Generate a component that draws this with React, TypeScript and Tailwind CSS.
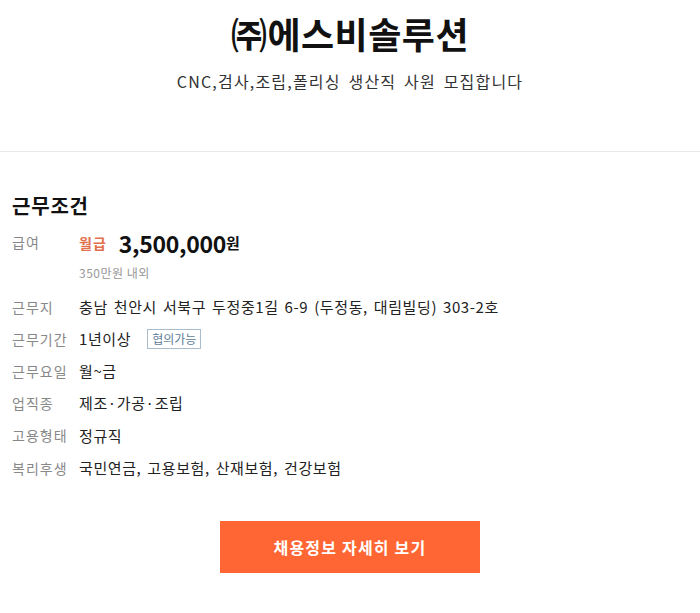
import React from "react";

const rows: { label: string; value: React.ReactNode }[] = [
  { label: "근무지", value: "충남 천안시 서북구 두정중1길 6-9 (두정동, 대림빌딩) 303-2호" },
  {
    label: "근무기간",
    value: (
      <span className="flex items-center">
        <span>1년이상</span>
        <span className="ml-[16px] border border-[#a9bccb] px-[4px] text-[12px] tracking-[0px] leading-[18px] text-[#5d7d97]">협의가능</span>
      </span>
    ),
  },
  { label: "근무요일", value: "월~금" },
  { label: "업직종", value: "제조·가공·조립" },
  { label: "고용형태", value: "정규직" },
  { label: "복리후생", value: "국민연금, 고용보험, 산재보험, 건강보험" },
];

export default function App() {
  return (
    <div
      className="w-[700px] h-[613px] bg-white text-[#222] overflow-hidden"
      style={{ fontFamily: '"Noto Sans CJK KR", "Noto Sans", sans-serif' }}
    >
      <div className="flex flex-col items-center pt-[8px] h-[152px] border-b border-[#eaeaea]">
        <h1 className="text-[36px] font-bold leading-[50px] text-[#111] tracking-[0.5px]">㈜에스비솔루션</h1>
        <p className="mt-[12px] text-[16px] leading-[22px] text-[#333] tracking-[1.2px] [word-spacing:3px]">CNC,검사,조립,폴리싱 생산직 사원 모집합니다</p>
      </div>
      <div className="px-[12px] pt-[40px]">
        <h2 className="text-[20px] font-bold leading-[28px] text-[#111] tracking-[0.8px]">근무조건</h2>
        <div className="mt-[10px] flex">
          <div className="w-[67px] text-[14px] leading-[24px] text-[#888] tracking-[1px]">급여</div>
          <div>
            <div className="flex items-center h-[26px]">
              <span className="text-[14px] font-bold text-[#e2704c] tracking-[1px]">월급</span>
              <span className="ml-[12px] text-[23px] font-bold text-[#111] leading-[26px] tracking-[-0.3px]">3,500,000</span>
              <span className="text-[15px] font-bold text-[#111]">원</span>
            </div>
            <div className="mt-[8px] text-[12px] leading-[18px] text-[#999] tracking-[0.5px]">350만원 내외</div>
          </div>
        </div>
        <div className="mt-[9px] flex flex-col">
          {rows.map((r) => (
            <div key={r.label} className="flex items-center h-[32.2px]">
              <div className="w-[67px] text-[14px] text-[#888] tracking-[1px]">{r.label}</div>
              <div className="text-[15px] text-[#222] tracking-[0.6px] [word-spacing:2px]">{r.value}</div>
            </div>
          ))}
        </div>
        <div className="mt-[37px] flex justify-center">
          <button className="w-[260px] h-[52px] bg-[#ff6633] text-white text-[16px] font-bold tracking-[1.2px]">채용정보 자세히 보기</button>
        </div>
      </div>
    </div>
  );
}
